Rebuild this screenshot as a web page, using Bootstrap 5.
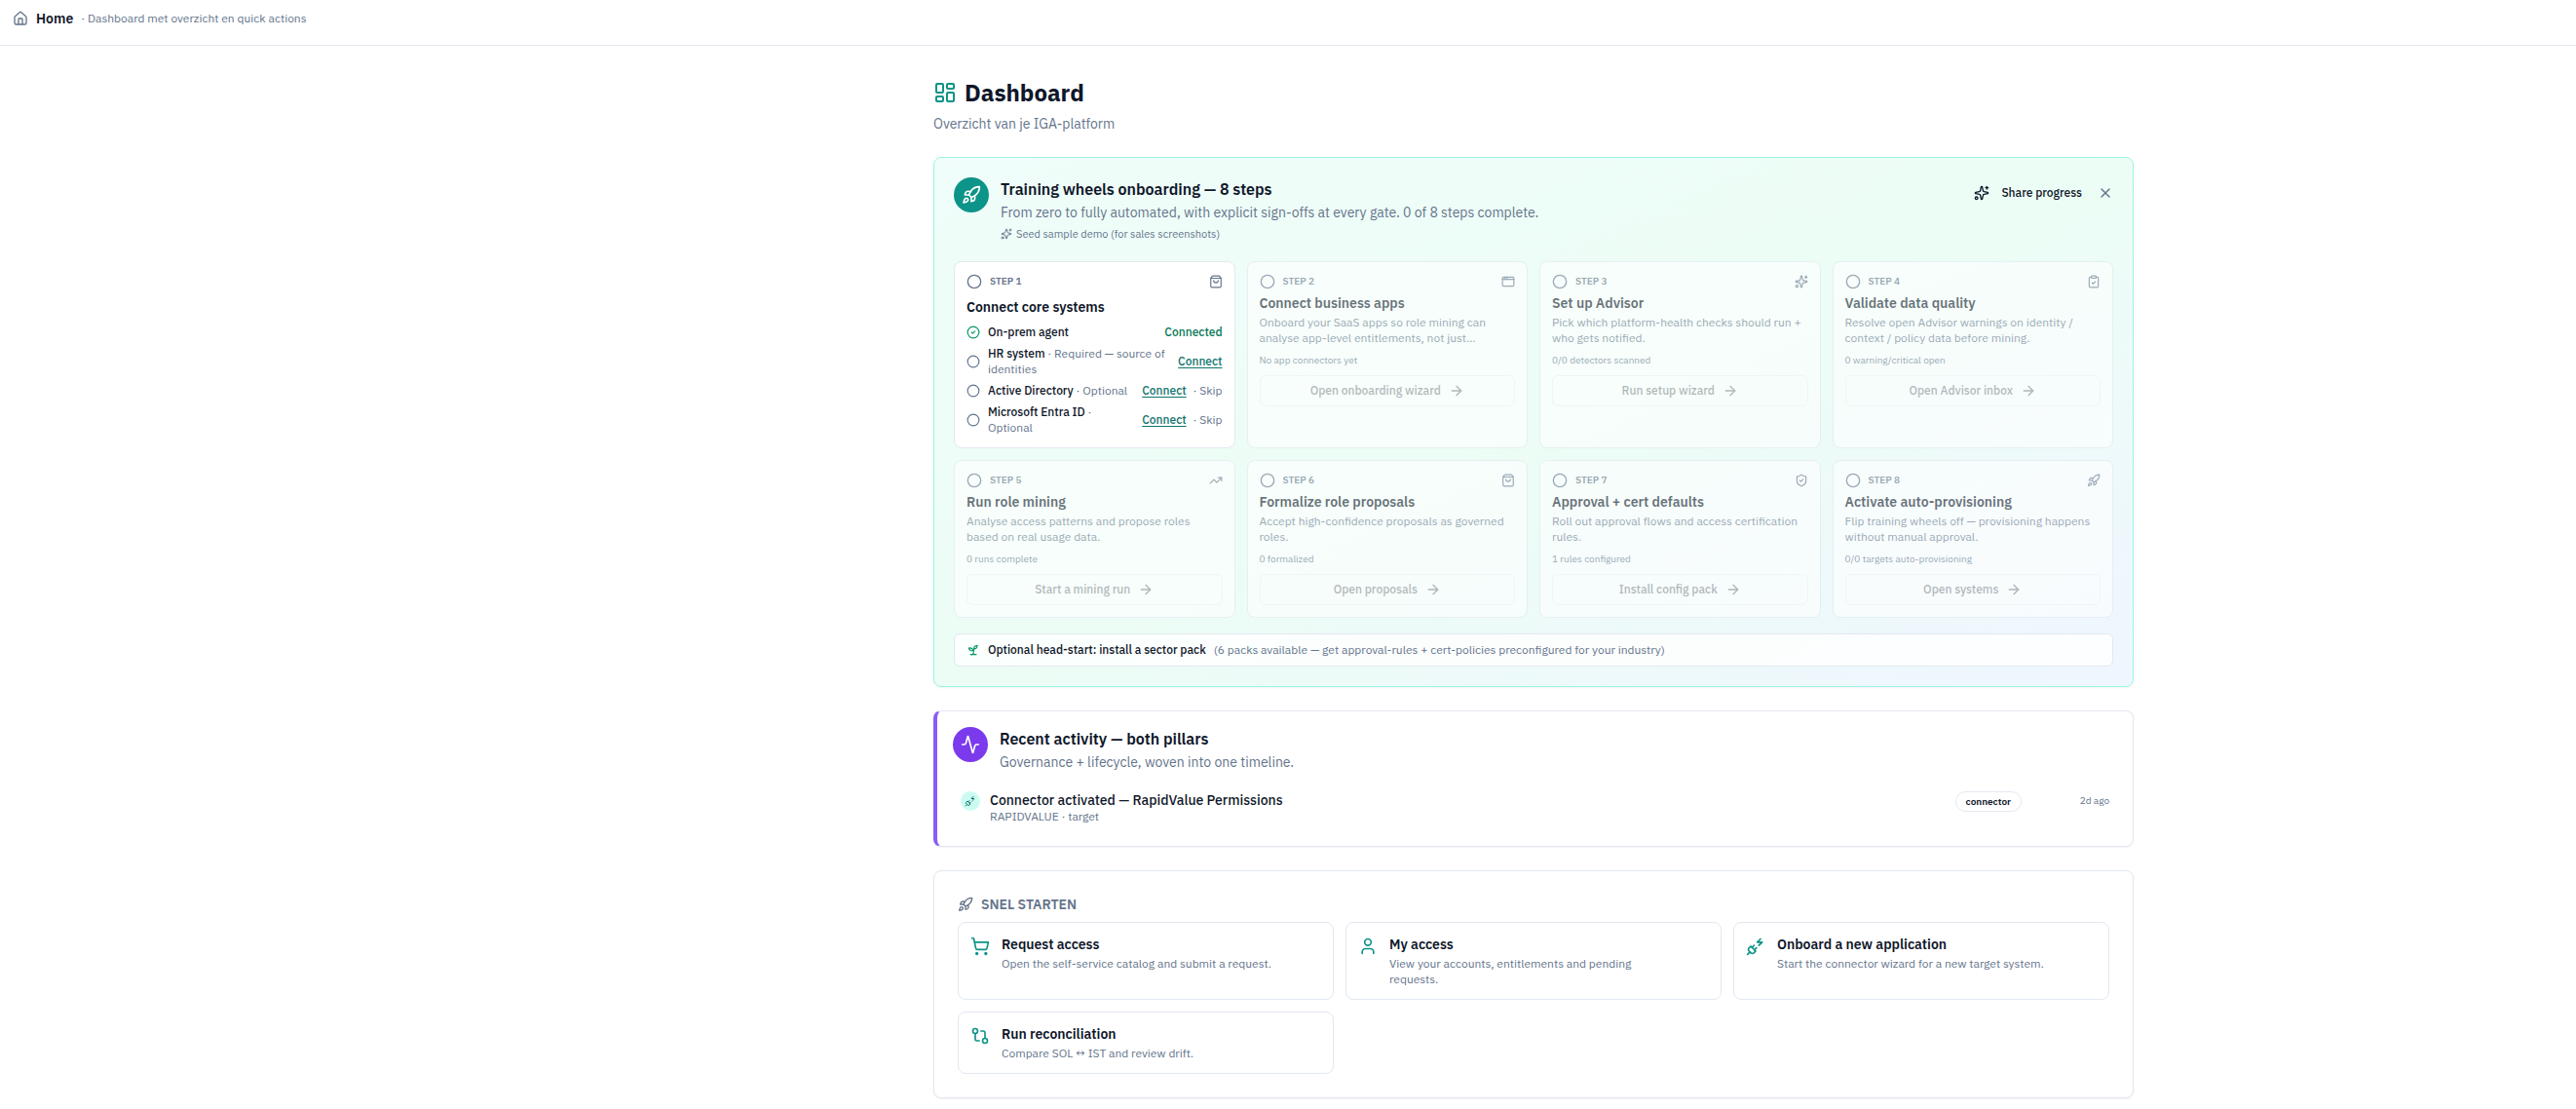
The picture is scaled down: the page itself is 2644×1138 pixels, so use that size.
<!DOCTYPE html>
<html lang="nl">
<head>
<meta charset="utf-8">
<meta name="viewport" content="width=device-width, initial-scale=1">
<title>Dashboard</title>
<link href="https://cdn.jsdelivr.net/npm/bootstrap@5.3.0/dist/css/bootstrap.min.css" rel="stylesheet">
<style>
:root{--ink:#0f172a;--muted:#64748b;--line:#e2e8f0;--teal:#0d9488}
body{font-family:"IBM Plex Sans",Roboto,"Liberation Sans",sans-serif;font-size:14px;line-height:20px;color:var(--ink);background:#fff}
svg{fill:none;stroke:currentColor;stroke-width:2;stroke-linecap:round;stroke-linejoin:round;flex:none;display:block}
.i12{width:12px;height:12px}.i14{width:14px;height:14px}.i16{width:16px;height:16px}.i20{width:20px;height:20px}.i24{width:24px;height:24px}
h1,h2,h3,p{margin:0}
.plain{border:0;background:none;padding:0;color:inherit;font:inherit}
.ink{color:var(--ink)}
.muted{color:var(--muted)}
.teal{color:var(--teal)}
.green{color:#059669}
.green-dark{color:#047857}
.t12{font-size:12px;line-height:16px}
.t10{font-size:10px;line-height:20px}
.topbar{height:47px;padding:0 14px 9px 13px;border-bottom:1px solid var(--line)}
.shell{padding:24px}
.board{max-width:1232px;margin:0 auto}
@media (min-width:1900px){.shell{padding-left:528px}}
.page-head{height:90px;padding-top:10px}
.page-head h1{font-size:24px;line-height:28px;font-weight:700}
.panel{border:1px solid var(--line);border-radius:8px;background:#fff;box-shadow:0 1px 2px rgba(0,0,0,.05);margin-bottom:24px}
.onboarding{border-color:#99f6e4;background:linear-gradient(to bottom right,#f0fdfa,#ecfdf5,#eff6ff);padding:20px}
.disc{width:36px;height:36px;border-radius:50%;color:#fff;background:var(--teal)}
.disc.violet{background:#7c3aed}
.head16{font-size:16px;line-height:24px;font-weight:600}
.head16 + p{margin-top:2px}
.head14{font-size:14px;line-height:20px;font-weight:600}
.seed{font-size:11px;line-height:16px;color:var(--muted);display:flex;align-items:center;gap:4px;margin-top:4px}
.grid4,.grid3{display:grid;gap:12px;grid-template-columns:1fr}
@media (min-width:768px){.grid4{grid-template-columns:repeat(2,1fr)}.grid3{grid-template-columns:repeat(2,1fr)}}
@media (min-width:1200px){.grid4{grid-template-columns:repeat(4,1fr)}.grid3{grid-template-columns:repeat(3,1fr)}}
.steps{margin-top:20px}
.step{border:1px solid var(--line);border-radius:8px;background:#fff;padding:12px}
.step.locked{opacity:.6}
.kicker{font-size:10px;line-height:16px;font-weight:600;color:var(--muted)}
.desc{margin-top:2px}
.sys{display:flex;align-items:center;gap:8px;font-size:12px;line-height:16px;margin-top:6px}
.sys b{font-weight:500}
.sys a{color:#0f766e;font-weight:500;text-decoration:underline;text-underline-offset:2px}
.meta10{font-size:10px;line-height:14px;color:var(--muted);margin:8px 0}
.go{display:flex;align-items:center;justify-content:center;gap:8px;width:100%;height:32px;border:1px solid var(--line);border-radius:6px;background:#fff;font-size:12px;font-weight:500;color:var(--ink)}
.go:disabled{opacity:.5;color:var(--ink)}
.pack{display:flex;align-items:center;gap:8px;min-height:34px;width:100%;padding:0 12px;border:1px solid var(--line);border-radius:6px;background:rgba(255,255,255,.8);font-size:12px;text-align:left;color:var(--ink);margin-top:16px}
.activity{border-left:4px solid #8b5cf6;padding:16px}
.feed{gap:10px;margin-top:12px;padding:8px 8px 6px}
.feed .line{line-height:18px}
.dot{width:20px;height:20px;border-radius:50%;background:#ccfbf1;color:#0f766e}
.pill{height:21px;border:1px solid var(--line);border-radius:11px;padding:0 10px;font-size:10px;line-height:19px;font-weight:600}
.ago{width:80px;text-align:right}
.quick{padding:24px;margin-bottom:0}
.tile{display:flex;gap:12px;border:1px solid var(--line);border-radius:8px;padding:12px 44px 12px 12px;color:var(--ink);text-decoration:none}
.tile svg,.tile .t12{margin-top:2px}
</style>
</head>
<body>
<svg width="0" height="0" class="position-absolute" aria-hidden="true">
<symbol id="house" viewBox="0 0 24 24"><path d="M15 21v-8a1 1 0 0 0-1-1h-4a1 1 0 0 0-1 1v8"/><path d="M3 10a2 2 0 0 1 .709-1.528l7-5.999a2 2 0 0 1 2.582 0l7 5.999A2 2 0 0 1 21 10v9a2 2 0 0 1-2 2H5a2 2 0 0 1-2-2z"/></symbol>
<symbol id="dash" viewBox="0 0 24 24"><rect width="7" height="9" x="3" y="3" rx="1"/><rect width="7" height="5" x="14" y="3" rx="1"/><rect width="7" height="9" x="14" y="12" rx="1"/><rect width="7" height="5" x="3" y="16" rx="1"/></symbol>
<symbol id="rocket" viewBox="0 0 24 24"><path d="M4.5 16.5c-1.5 1.26-2 5-2 5s3.74-.5 5-2c.71-.84.7-2.13-.09-2.91a2.18 2.18 0 0 0-2.91-.09z"/><path d="m12 15-3-3a22 22 0 0 1 2-3.95A12.88 12.88 0 0 1 22 2c0 2.72-.78 7.5-6 11a22.35 22.35 0 0 1-4 2z"/><path d="M9 12H4s.55-3.03 2-4c1.62-1.08 5 0 5 0"/><path d="M12 15v5s3.03-.55 4-2c1.08-1.62 0-5 0-5"/></symbol>
<symbol id="sparkles" viewBox="0 0 24 24"><path d="M11.017 2.814a1 1 0 0 1 1.966 0l1.051 5.558a2 2 0 0 0 1.594 1.594l5.558 1.051a1 1 0 0 1 0 1.966l-5.558 1.051a2 2 0 0 0-1.594 1.594l-1.051 5.558a1 1 0 0 1-1.966 0l-1.051-5.558a2 2 0 0 0-1.594-1.594l-5.558-1.051a1 1 0 0 1 0-1.966l5.558-1.051a2 2 0 0 0 1.594-1.594z"/><path d="M20 2v4"/><path d="M22 4h-4"/><circle cx="4" cy="20" r="2"/></symbol>
<symbol id="close" viewBox="0 0 24 24"><path d="M18 6 6 18"/><path d="m6 6 12 12"/></symbol>
<symbol id="ring" viewBox="0 0 24 24"><circle cx="12" cy="12" r="10"/></symbol>
<symbol id="ringcheck" viewBox="0 0 24 24"><circle cx="12" cy="12" r="10"/><path d="m9 12 2 2 4-4"/></symbol>
<symbol id="bag" viewBox="0 0 24 24"><path d="M16 10a4 4 0 0 1-8 0"/><path d="M3.103 6.034h17.794"/><path d="M3.4 5.467a2 2 0 0 0-.4 1.2V20a2 2 0 0 0 2 2h14a2 2 0 0 0 2-2V6.667a2 2 0 0 0-.4-1.2l-2-2.667A2 2 0 0 0 17 2H7a2 2 0 0 0-1.6.8z"/></symbol>
<symbol id="appwin" viewBox="0 0 24 24"><rect x="2" y="4" width="20" height="16" rx="2"/><path d="M10 4v4"/><path d="M2 8h20"/><path d="M6 4v4"/></symbol>
<symbol id="clip" viewBox="0 0 24 24"><rect width="8" height="4" x="8" y="2" rx="1"/><path d="M16 4h2a2 2 0 0 1 2 2v14a2 2 0 0 1-2 2H6a2 2 0 0 1-2-2V6a2 2 0 0 1 2-2h2"/><path d="m9 14 2 2 4-4"/></symbol>
<symbol id="trend" viewBox="0 0 24 24"><path d="M16 7h6v6"/><path d="m22 7-8.5 8.5-5-5L2 17"/></symbol>
<symbol id="shield" viewBox="0 0 24 24"><path d="M20 13c0 5-3.5 7.5-7.66 8.95a1 1 0 0 1-.67-.01C7.5 20.5 4 18 4 13V6a1 1 0 0 1 1-1c2 0 4.5-1.2 6.24-2.72a1.17 1.17 0 0 1 1.52 0C14.51 3.81 17 5 19 5a1 1 0 0 1 1 1z"/><path d="m9 12 2 2 4-4"/></symbol>
<symbol id="arrow" viewBox="0 0 24 24"><path d="M5 12h14"/><path d="m12 5 7 7-7 7"/></symbol>
<symbol id="sprout" viewBox="0 0 24 24"><path d="M7 20h10"/><path d="M10 20c5.5-2.5.8-6.4 3-10"/><path d="M9.5 9.4c1.1.8 1.8 2.2 2.3 3.7-2 .4-3.5.4-4.8-.3-1.2-.6-2.3-1.9-3-4.2 2.8-.5 4.4 0 5.5.8z"/><path d="M14.1 6a7 7 0 0 0-1.1 4c1.9-.1 3.3-.6 4.3-1.4 1-1 1.6-2.3 1.7-4.6-2.7.1-4 1-4.9 2z"/></symbol>
<symbol id="pulse" viewBox="0 0 24 24"><path d="M22 12h-2.48a2 2 0 0 0-1.93 1.46l-2.35 8.36a.25.25 0 0 1-.48 0L9.24 2.18a.25.25 0 0 0-.48 0l-2.35 8.36A2 2 0 0 1 4.49 12H2"/></symbol>
<symbol id="plug" viewBox="0 0 24 24"><path d="M6.3 20.3a2.4 2.4 0 0 0 3.4 0L12 18l-6-6-2.3 2.3a2.4 2.4 0 0 0 0 3.4Z"/><path d="m2 22 3-3"/><path d="M7.5 13.5 10 11"/><path d="M10.5 16.5 13 14"/><path d="m18 3-4 4h6l-4 4"/></symbol>
<symbol id="cart" viewBox="0 0 24 24"><circle cx="8" cy="21" r="1"/><circle cx="19" cy="21" r="1"/><path d="M2.05 2.05h2l2.66 12.42a2 2 0 0 0 2 1.58h9.78a2 2 0 0 0 1.95-1.57l1.65-7.43H5.12"/></symbol>
<symbol id="user" viewBox="0 0 24 24"><path d="M19 21v-2a4 4 0 0 0-4-4H9a4 4 0 0 0-4 4v2"/><circle cx="12" cy="7" r="4"/></symbol>
<symbol id="compare" viewBox="0 0 24 24"><circle cx="18" cy="18" r="3"/><circle cx="6" cy="6" r="3"/><path d="M13 6h3a2 2 0 0 1 2 2v7"/><path d="M11 18H8a2 2 0 0 1-2-2V9"/></symbol>
</svg>

<header class="topbar d-flex align-items-center">
  <svg class="i16 muted"><use href="#house"/></svg>
  <span class="head14 ms-2">Home</span>
  <span class="t12 muted ms-2">· Dashboard met overzicht en quick actions</span>
</header>

<main class="shell">
<div class="board">
  <div class="page-head">
    <div class="d-flex align-items-center gap-2"><svg class="i24 teal"><use href="#dash"/></svg><h1>Dashboard</h1></div>
    <p class="muted mt-2">Overzicht van je IGA-platform</p>
  </div>

  <section class="panel onboarding">
    <div class="d-flex align-items-start">
      <div class="disc d-flex align-items-center justify-content-center flex-shrink-0 me-2"><svg class="i20"><use href="#rocket"/></svg></div>
      <div class="flex-grow-1 ms-1">
        <h2 class="head16">Training wheels onboarding — 8 steps</h2>
        <p class="muted">From zero to fully automated, with explicit sign-offs at every gate. 0 of 8 steps complete.</p>
        <button type="button" class="plain seed"><svg class="i12"><use href="#sparkles"/></svg>Seed sample demo (for sales screenshots)</button>
      </div>
      <div class="d-flex align-items-center gap-3 pt-2">
        <button type="button" class="plain t12 fw-medium d-flex align-items-center gap-2"><svg class="i16"><use href="#sparkles"/></svg><span class="ms-1">Share progress</span></button>
        <button type="button" class="plain muted" aria-label="Close"><svg class="i16"><use href="#close"/></svg></button>
      </div>
    </div>

    <div class="grid4 steps">
      <article class="step">
        <div class="d-flex align-items-center gap-2 muted"><svg class="i16"><use href="#ring"/></svg><span class="kicker">STEP 1</span><svg class="i14 ms-auto"><use href="#bag"/></svg></div>
        <h3 class="head14 mt-2 mb-2">Connect core systems</h3>
        <div class="sys mt-0"><svg class="i14 green"><use href="#ringcheck"/></svg><b>On-prem agent</b><b class="ms-auto green-dark">Connected</b></div>
        <div class="sys"><svg class="i14 muted"><use href="#ring"/></svg><span class="muted flex-grow-1"><b class="ink">HR system</b> · Required — source of identities</span><a href="#">Connect</a></div>
        <div class="sys"><svg class="i14 muted"><use href="#ring"/></svg><span class="muted flex-grow-1"><b class="ink">Active Directory</b> · Optional</span><span class="muted text-nowrap"><a href="#" class="me-1">Connect</a> · Skip</span></div>
        <div class="sys"><svg class="i14 muted"><use href="#ring"/></svg><span class="muted flex-grow-1"><b class="ink">Microsoft Entra ID</b> · Optional</span><span class="muted text-nowrap"><a href="#" class="me-1">Connect</a> · Skip</span></div>
      </article>
      <article class="step locked">
        <div class="d-flex align-items-center gap-2 muted"><svg class="i16"><use href="#ring"/></svg><span class="kicker">STEP 2</span><svg class="i14 ms-auto"><use href="#appwin"/></svg></div>
        <h3 class="head14 mt-1">Connect business apps</h3>
        <p class="t12 muted desc">Onboard your SaaS apps so role mining can analyse app-level entitlements, not just…</p>
        <p class="meta10">No app connectors yet</p>
        <button type="button" class="go" disabled>Open onboarding wizard<svg class="i16"><use href="#arrow"/></svg></button>
      </article>
      <article class="step locked">
        <div class="d-flex align-items-center gap-2 muted"><svg class="i16"><use href="#ring"/></svg><span class="kicker">STEP 3</span><svg class="i14 ms-auto"><use href="#sparkles"/></svg></div>
        <h3 class="head14 mt-1">Set up Advisor</h3>
        <p class="t12 muted desc">Pick which platform-health checks should run + who gets notified.</p>
        <p class="meta10">0/0 detectors scanned</p>
        <button type="button" class="go" disabled>Run setup wizard<svg class="i16"><use href="#arrow"/></svg></button>
      </article>
      <article class="step locked">
        <div class="d-flex align-items-center gap-2 muted"><svg class="i16"><use href="#ring"/></svg><span class="kicker">STEP 4</span><svg class="i14 ms-auto"><use href="#clip"/></svg></div>
        <h3 class="head14 mt-1">Validate data quality</h3>
        <p class="t12 muted desc">Resolve open Advisor warnings on identity / context / policy data before mining.</p>
        <p class="meta10">0 warning/critical open</p>
        <button type="button" class="go" disabled>Open Advisor inbox<svg class="i16"><use href="#arrow"/></svg></button>
      </article>
      <article class="step locked">
        <div class="d-flex align-items-center gap-2 muted"><svg class="i16"><use href="#ring"/></svg><span class="kicker">STEP 5</span><svg class="i14 ms-auto"><use href="#trend"/></svg></div>
        <h3 class="head14 mt-1">Run role mining</h3>
        <p class="t12 muted desc">Analyse access patterns and propose roles based on real usage data.</p>
        <p class="meta10">0 runs complete</p>
        <button type="button" class="go" disabled>Start a mining run<svg class="i16"><use href="#arrow"/></svg></button>
      </article>
      <article class="step locked">
        <div class="d-flex align-items-center gap-2 muted"><svg class="i16"><use href="#ring"/></svg><span class="kicker">STEP 6</span><svg class="i14 ms-auto"><use href="#bag"/></svg></div>
        <h3 class="head14 mt-1">Formalize role proposals</h3>
        <p class="t12 muted desc">Accept high-confidence proposals as governed roles.</p>
        <p class="meta10">0 formalized</p>
        <button type="button" class="go" disabled>Open proposals<svg class="i16"><use href="#arrow"/></svg></button>
      </article>
      <article class="step locked">
        <div class="d-flex align-items-center gap-2 muted"><svg class="i16"><use href="#ring"/></svg><span class="kicker">STEP 7</span><svg class="i14 ms-auto"><use href="#shield"/></svg></div>
        <h3 class="head14 mt-1">Approval + cert defaults</h3>
        <p class="t12 muted desc">Roll out approval flows and access certification rules.</p>
        <p class="meta10">1 rules configured</p>
        <button type="button" class="go" disabled>Install config pack<svg class="i16"><use href="#arrow"/></svg></button>
      </article>
      <article class="step locked">
        <div class="d-flex align-items-center gap-2 muted"><svg class="i16"><use href="#ring"/></svg><span class="kicker">STEP 8</span><svg class="i14 ms-auto"><use href="#rocket"/></svg></div>
        <h3 class="head14 mt-1">Activate auto-provisioning</h3>
        <p class="t12 muted desc">Flip training wheels off — provisioning happens without manual approval.</p>
        <p class="meta10">0/0 targets auto-provisioning</p>
        <button type="button" class="go" disabled>Open systems<svg class="i16"><use href="#arrow"/></svg></button>
      </article>
    </div>

    <button type="button" class="pack"><svg class="i14 green"><use href="#sprout"/></svg><span class="fw-medium">Optional head-start: install a sector pack</span><span class="muted">(6 packs available — get approval-rules + cert-policies preconfigured for your industry)</span></button>
  </section>

  <section class="panel activity">
    <div class="d-flex align-items-start">
      <div class="disc violet d-flex align-items-center justify-content-center flex-shrink-0 me-2"><svg class="i20"><use href="#pulse"/></svg></div>
      <div class="ms-1">
        <h2 class="head16">Recent activity — both pillars</h2>
        <p class="muted">Governance + lifecycle, woven into one timeline.</p>
      </div>
    </div>
    <div class="feed d-flex align-items-start">
      <span class="dot d-flex align-items-center justify-content-center flex-shrink-0"><svg class="i12"><use href="#plug"/></svg></span>
      <div class="flex-grow-1"><div class="line fw-medium">Connector activated — RapidValue Permissions</div><div class="t12 muted">RAPIDVALUE · target</div></div>
      <span class="pill">connector</span>
      <span class="ago t10 muted">2d ago</span>
    </div>
  </section>

  <section class="panel quick">
    <h2 class="head14 muted d-flex align-items-center gap-2 mb-2"><svg class="i16"><use href="#rocket"/></svg>SNEL STARTEN</h2>
    <div class="grid3">
      <a class="tile" href="#"><svg class="i20 teal"><use href="#cart"/></svg><span><span class="d-block head14">Request access</span><span class="d-block t12 muted">Open the self-service catalog and submit a request.</span></span></a>
      <a class="tile" href="#"><svg class="i20 teal"><use href="#user"/></svg><span><span class="d-block head14">My access</span><span class="d-block t12 muted">View your accounts, entitlements and pending requests.</span></span></a>
      <a class="tile" href="#"><svg class="i20 teal"><use href="#plug"/></svg><span><span class="d-block head14">Onboard a new application</span><span class="d-block t12 muted">Start the connector wizard for a new target system.</span></span></a>
      <a class="tile" href="#"><svg class="i20 teal"><use href="#compare"/></svg><span><span class="d-block head14">Run reconciliation</span><span class="d-block t12 muted">Compare SOL ↔ IST and review drift.</span></span></a>
    </div>
  </section>
</div>
</main>
<script src="https://cdn.jsdelivr.net/npm/bootstrap@5.3.0/dist/js/bootstrap.bundle.min.js"></script>
</body>
</html>
